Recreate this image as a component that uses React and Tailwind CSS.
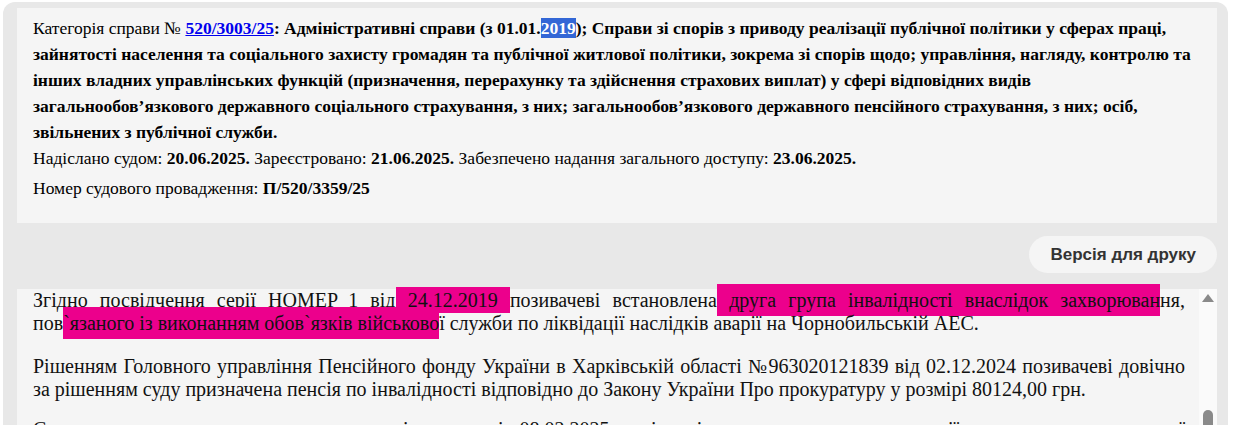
import React from "react";

const serif = { fontFamily: '"Liberation Serif", "Times New Roman", serif' };

const Mark = ({ children, className = "" }) => (
  <span className={"bg-[#ec008c] " + className}>{children}</span>
);

const App = () => {
  return (
    <div className="min-h-screen bg-white pl-[3px] pt-[2px] pr-[12px] overflow-hidden">
      <div className="bg-[#e8e8e8] rounded-t-[12px] pl-[14px] pr-[11px] pt-[6px] h-[423px] overflow-hidden">
        {/* шапка справи */}
        <div
          className="bg-[#f5f5f5] px-4 pt-[7px] h-[215px] text-black text-[17.5px]"
          style={serif}
        >
          <p className="leading-[26px] font-bold">
            <span className="font-normal">Категорія справи № </span>
            <a href="#" className="text-[#0000ee] underline">
              520/3003/25
            </a>
            : Адміністративні справи (з 01.01.
            <span className="bg-[#3367d6] text-white">2019</span>); Справи зі
            спорів з приводу реалізації публічної політики у сферах праці,
            зайнятості населення та соціального захисту громадян та публічної
            житлової політики, зокрема зі спорів щодо; управління, нагляду,
            контролю та інших владних управлінських функцій (призначення,
            перерахунку та здійснення страхових виплат) у сфері відповідних
            видів загальнообов’язкового державного соціального страхування, з
            них; загальнообов’язкового державного пенсійного страхування, з
            них; осіб, звільнених з публічної служби.
          </p>
          <p className="leading-[22px] mt-[2px]">
            Надіслано судом: <b>20.06.2025.</b> Зареєстровано:{" "}
            <b>21.06.2025.</b> Забезпечено надання загального доступу:{" "}
            <b>23.06.2025.</b>
          </p>
          <p className="leading-[22px] mt-[8px]">
            Номер судового провадження: <b>П/520/3359/25</b>
          </p>
        </div>

        <div className="flex justify-end mt-[13px]">
          <button
            className="h-[37px] px-[21px] rounded-full bg-[#f5f5f5] text-[#333] font-bold text-[17px]"
            style={{ fontFamily: '"Liberation Sans", Arial, sans-serif' }}
          >
            Версія для друку
          </button>
        </div>

        {/* текст рішення */}
        <div className="mt-[16px] bg-[#f5f5f5] flex h-[200px]">
          <div
            className="flex-1 pl-4 pr-[14px] text-[20px] leading-[23px] text-[#111] text-justify"
            style={serif}
          >
            <p>
              Згідно посвідчення серії НОМЕР_1 від
              <Mark className="py-[2px]"> 24.12.2019 </Mark>
              позивачеві встановлена
              <Mark className="py-[5px]">
                {" "}
                друга група інвалідності внаслідок захворюван
              </Mark>
              ня, пов
              <Mark className="py-[5px]">
                `язаного із виконанням обов`язків військово
              </Mark>
              ї служби по ліквідації наслідків аварії на Чорнобильській АЕС.
            </p>
            <p className="mt-[20px]">
              Рішенням Головного управління Пенсійного фонду України в
              Харківській області №963020121839 від 02.12.2024 позивачеві
              довічно за рішенням суду призначена пенсія по інвалідності
              відповідно до Закону України Про прокуратуру у розмірі 80124,00
              грн.
            </p>
            <p className="mt-[17px]">
              Судом встановлено, що позивач звернувся із заявою від 08.02.2025
              до відповідача щодо перерахунку пенсії з урахуванням актуальної
              довідки про заробітну плату.
            </p>
          </div>
          <div className="w-[18px] bg-[#fafafa] flex flex-col items-center pt-[5px]">
            <div className="w-0 h-0 border-l-[6px] border-r-[6px] border-b-[8px] border-l-transparent border-r-transparent border-b-[#8a8a8a]" />
            <div className="mt-[108px] w-[10px] h-[60px] rounded-full bg-[#8a8a8a]" />
          </div>
        </div>
      </div>
    </div>
  );
};

export default App;
